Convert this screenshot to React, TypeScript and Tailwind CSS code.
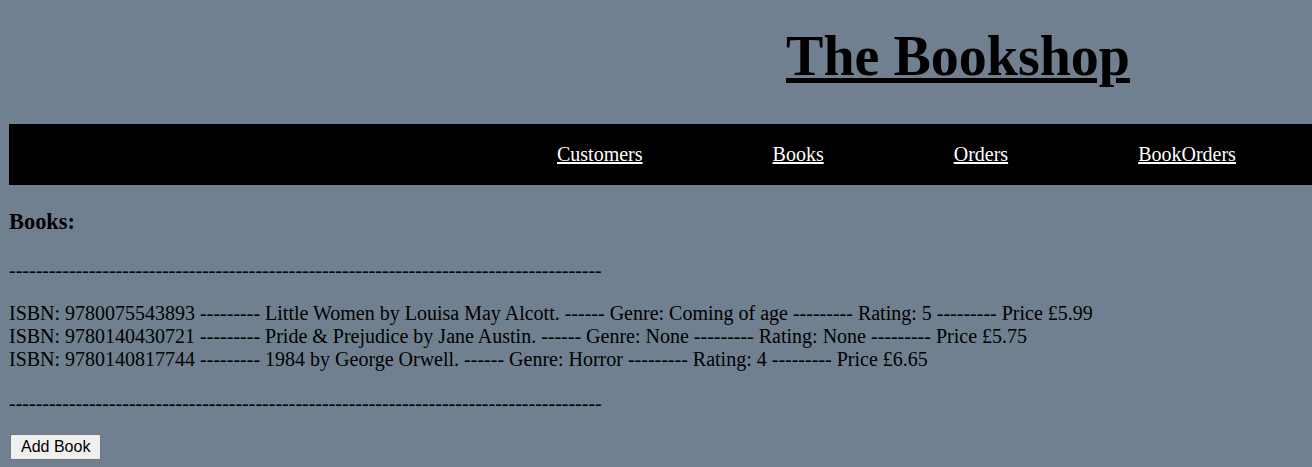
const books = [
  {
    isbn: '9780075543893',
    title: 'Little Women',
    author: 'Louisa May Alcott',
    genre: 'Coming of age',
    rating: '5',
    price: '£5.99',
  },
  {
    isbn: '9780140430721',
    title: 'Pride & Prejudice',
    author: 'Jane Austin',
    genre: 'None',
    rating: 'None',
    price: '£5.75',
  },
  {
    isbn: '9780140817744',
    title: '1984',
    author: 'George Orwell',
    genre: 'Horror',
    rating: '4',
    price: '£6.65',
  },
];

const links = ['Customers', 'Books', 'Orders', 'BookOrders'];

const separator = '-'.repeat(89);

export default function App() {
  return (
    <div className="min-h-screen bg-[#708090] text-black font-['Liberation_Serif','Times_New_Roman',serif] leading-[normal] pt-[24px] overflow-hidden">
      <h1 className="pl-[604px] text-center text-[56px] font-bold leading-[normal]">
        <span className="underline">The Bookshop</span>
      </h1>

      <nav className="mt-[35.5px] ml-[9px] h-[61px] bg-black flex items-center pl-[548px] gap-[130px]">
        {links.map((l) => (
          <a key={l} href="#" className="text-white underline text-[20px] leading-[normal]">
            {l}
          </a>
        ))}
      </nav>

      <main className="pl-[9px] text-[20px] leading-[normal]">
        <h3 className="mt-[24px] mb-[24.5px] text-[22.4px] font-bold leading-[normal]">Books:</h3>

        <p>{separator}</p>

        <div className="mt-[20px] mb-[21px]">
          {books.map((b) => (
            <div key={b.isbn} className="whitespace-pre">
              {`ISBN: ${b.isbn} --------- ${b.title} by ${b.author}. ------ Genre: ${b.genre} --------- Rating: ${b.rating} --------- Price ${b.price}`}
            </div>
          ))}
        </div>

        <p>{separator}</p>

        <button className="mt-[19px] ml-[1px] h-[26px] px-[10px] border border-[#767676] rounded-[2px] bg-[#efefef] text-[16px] leading-[18px] font-['Liberation_Sans',Arial,sans-serif] text-black">
          Add Book
        </button>
      </main>
    </div>
  );
}
